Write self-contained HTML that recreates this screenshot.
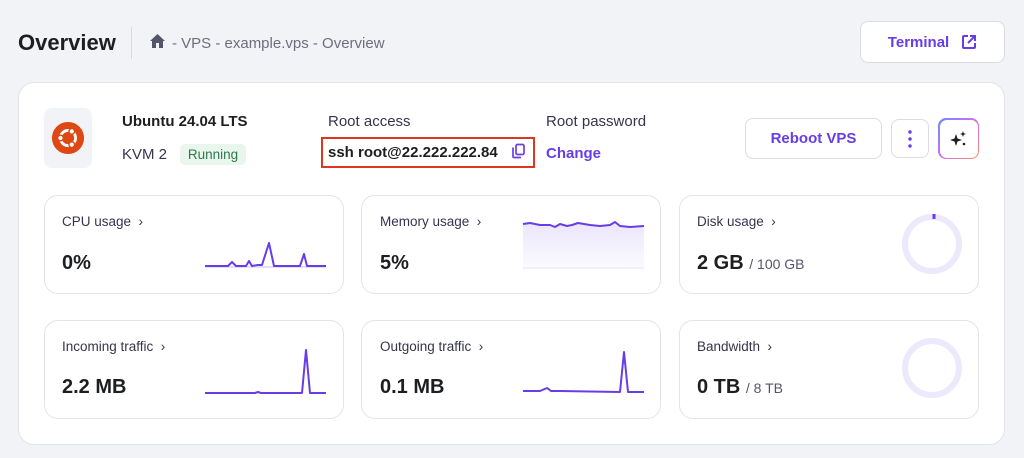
<!DOCTYPE html>
<html><head><style>
*{margin:0;padding:0;box-sizing:border-box}
body{width:1024px;height:458px;background:#f2f3f6;font-family:"Liberation Sans",sans-serif;color:#1d1e20;position:relative;overflow:hidden}
.a{position:absolute}
.card{position:absolute;background:#fff;border:1px solid #e3e4e8;border-radius:14px}
.btn{position:absolute;background:#fff;border:1px solid #dadce0;border-radius:8px;color:#673de6;font-weight:bold;font-size:15px;display:flex;align-items:center;justify-content:center}
.lbl{position:absolute;font-size:13.5px;color:#36344d}
.val{position:absolute;font-size:20px;font-weight:bold;color:#1d1e20}
.val small{font-size:14px;font-weight:normal;color:#55556a}
</style></head><body>
<div class="a" style="left:18px;top:30px;font-size:22px;font-weight:bold">Overview</div>
<div class="a" style="left:131px;top:27px;width:1px;height:32px;background:#d8dae0"></div>
<svg class="a" style="left:149px;top:33px" width="17" height="16" viewBox="0 0 17 16"><path d="M8.5 1L1 8h2v7h4v-5h3v5h4V8h2z" fill="#55556a"/></svg>
<div class="a" style="left:172px;top:35px;font-size:15px;color:#6d6d80">- VPS - example.vps - Overview</div>
<div class="btn" style="left:860px;top:21px;width:145px;height:42px">Terminal<svg style="margin-left:12px" width="16" height="16" viewBox="0 0 16 16" fill="none" stroke="#673de6" stroke-width="2"><path d="M7 2H3a1 1 0 0 0-1 1v10a1 1 0 0 0 1 1h10a1 1 0 0 0 1-1V9"/><path d="M9 2h5v5M14 2L7 9"/></svg></div>
<div class="card" style="left:18px;top:82px;width:987px;height:363px;border-radius:16px"></div>
<div class="a" style="left:44px;top:108px;width:48px;height:60px;background:#f2f3f6;border-radius:8px"></div>
<svg class="a" style="left:51px;top:121px" width="34" height="34" viewBox="0 0 36 36"><circle cx="18" cy="18" r="17" fill="#dd4814"/><circle cx="18" cy="18" r="8" fill="none" stroke="#fff" stroke-width="3"/><circle cx="10" cy="18" r="3" fill="#fff" stroke="#dd4814" stroke-width="1.5"/><circle cx="22" cy="11" r="3" fill="#fff" stroke="#dd4814" stroke-width="1.5"/><circle cx="22" cy="25" r="3" fill="#fff" stroke="#dd4814" stroke-width="1.5"/></svg>
<div class="a" style="left:122px;top:113px;font-size:15px;font-weight:bold">Ubuntu 24.04 LTS</div>
<div class="a" style="left:122px;top:146px;font-size:15px;color:#36344d">KVM 2</div>
<div class="a" style="left:180px;top:144px;width:66px;height:21px;background:#e9f6ee;border-radius:5px;color:#2f7a4a;font-size:13.5px;text-align:center;line-height:21px">Running</div>
<div class="a" style="left:328px;top:113px;font-size:15px;color:#36344d">Root access</div>
<div class="a" style="left:321px;top:137px;width:214px;height:31px;border:2px solid #e0351f"></div>
<div class="a" style="left:328px;top:144px;font-size:15px;font-weight:bold">ssh root@22.222.222.84</div>
<svg class="a" style="left:511px;top:143px" width="15" height="16" viewBox="0 0 15 16" fill="none" stroke="#673de6" stroke-width="1.7"><rect x="5" y="1.5" width="8" height="10" rx="1.5"/><path d="M2 4.5v9a1 1 0 0 0 1 1h7"/></svg>
<div class="a" style="left:546px;top:113px;font-size:15px;color:#36344d">Root password</div>
<div class="a" style="left:546px;top:145px;font-size:15px;font-weight:bold;color:#673de6">Change</div>
<div class="btn" style="left:745px;top:118px;width:137px;height:41px">Reboot VPS</div>
<div class="btn" style="left:891px;top:119px;width:38px;height:39px;font-size:20px"><svg width="4" height="18"><circle cx="2" cy="2" r="1.7" fill="#673de6"/><circle cx="2" cy="9" r="1.7" fill="#673de6"/><circle cx="2" cy="16" r="1.7" fill="#673de6"/></svg></div>
<div class="a" style="left:938px;top:118px;width:41px;height:41px;border-radius:8px;background:linear-gradient(135deg,#6b8cff,#d36cf5,#ff8a5b);padding:1.5px"><div style="width:100%;height:100%;background:#fff;border-radius:7px;display:flex;align-items:center;justify-content:center"><svg width="20" height="20" viewBox="0 0 20 20" fill="#1d1e20"><path d="M7 5l1.5 4.5L13 11l-4.5 1.5L7 17l-1.5-4.5L1 11l4.5-1.5z"/><path d="M14 2l.8 2.2L17 5l-2.2.8L14 8l-.8-2.2L11 5l2.2-.8z"/><circle cx="15" cy="15" r="1.3"/></svg></div></div>

<div class="card" style="left:44px;top:195px;width:300px;height:99px"></div>
<div class="card" style="left:361px;top:195px;width:300px;height:99px"></div>
<div class="card" style="left:679px;top:195px;width:300px;height:99px"></div>
<div class="card" style="left:44px;top:320px;width:300px;height:99px"></div>
<div class="card" style="left:361px;top:320px;width:300px;height:99px"></div>
<div class="card" style="left:679px;top:320px;width:300px;height:99px"></div>

<div class="lbl" style="left:62px;top:214px">CPU usage &nbsp;›</div>
<div class="val" style="left:62px;top:252px">0%</div>
<div class="lbl" style="left:380px;top:214px">Memory usage &nbsp;›</div>
<div class="val" style="left:380px;top:252px">5%</div>
<div class="lbl" style="left:697px;top:214px">Disk usage &nbsp;›</div>
<div class="val" style="left:697px;top:252px">2 GB <small>/ 100 GB</small></div>
<div class="lbl" style="left:62px;top:339px">Incoming traffic &nbsp;›</div>
<div class="val" style="left:62px;top:376px">2.2 MB</div>
<div class="lbl" style="left:380px;top:339px">Outgoing traffic &nbsp;›</div>
<div class="val" style="left:380px;top:376px">0.1 MB</div>
<div class="lbl" style="left:697px;top:339px">Bandwidth &nbsp;›</div>
<div class="val" style="left:697px;top:376px">0 TB <small>/ 8 TB</small></div>

<svg class="a" style="left:0;top:0" width="1024" height="458">
<defs><linearGradient id="g" x1="0" y1="0" x2="0" y2="1"><stop offset="0" stop-color="#ebe6fc"/><stop offset="1" stop-color="#fbfaff"/></linearGradient></defs>
<g fill="none" stroke="#673de6" stroke-width="2" stroke-linejoin="round">
<line x1="205" y1="267" x2="326" y2="267" stroke="#e3defa" stroke-width="2"/>
<polyline points="205,266 228,266 232,262 236,266 246,266 249,261 252,266 258,265 262,265 269,243 274,266 300,266 304,254 307,266 326,266"/>
<polygon points="523,224 530,223 540,225 550,225 555,227 560,224 567,226 572,225 578,223 590,225 600,226 610,225 615,222 620,226 630,227 644,226 644,268 523,268" fill="url(#g)" stroke="none"/>
<line x1="523" y1="268" x2="644" y2="268" stroke="#e3e4f0" stroke-width="1"/>
<polyline points="523,224 530,223 540,225 550,225 555,227 560,224 567,226 572,225 578,223 590,225 600,226 610,225 615,222 620,226 630,227 644,226"/>
<polyline points="205,393 255,393 258,392 261,393 302,393 306,350 310,393 326,393"/>
<polyline points="523,391 540,391 547,388 551,391 560,391 620,392 624,352 628,392 644,392"/>
<circle cx="932" cy="244" r="27" stroke="#ede9fc" stroke-width="6"/>
<line x1="934" y1="214" x2="934" y2="219" stroke-width="3"/>
<circle cx="932" cy="368" r="27" stroke="#ede9fc" stroke-width="6"/>
</g></svg>
</body></html>
